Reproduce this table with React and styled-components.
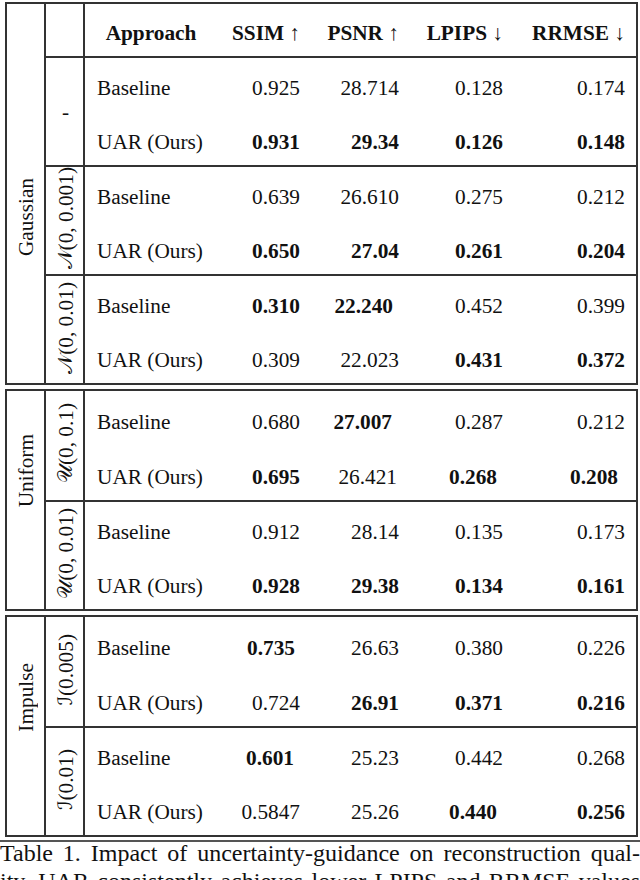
import React from 'react';
import styled, { createGlobalStyle } from 'styled-components';

const LINE = '#333';

const GlobalStyle = createGlobalStyle`
  html, body {
    margin: 0;
    padding: 0;
    background: #fff;
    overflow: hidden;
  }
  body {
    font-family: "Liberation Serif", "Times New Roman", serif;
    color: #111;
  }
`;

const Page = styled.div`
  width: 640px;
  padding-top: 2px;
  display: flex;
  flex-direction: column;
`;

const Stack = styled.div`
  display: flex;
  flex-direction: column;
  gap: 4px;
`;

const Box = styled.table`
  margin-left: 5px;
  width: 633px;
  border: 2px solid ${LINE};
  border-spacing: 0;
  table-layout: fixed;
  font-size: 21.3px;
  line-height: 24px;
`;

const Col = styled.col`
  width: ${props => props.$w}px;
`;

const Row = styled.tr`
  height: ${props => props.$h}px;
`;

const Blank = styled.td`
  border-right: 2px solid ${LINE};
  padding: 0;
`;

const HeadCell = styled.th`
  padding: 5px ${props => props.$pad}px 0 0;
  text-align: ${props => props.$align};
  font-weight: 700;
  white-space: nowrap;
  vertical-align: middle;
`;

const Arrow = styled.span`
  font-weight: 400;
`;

const Category = styled.td`
  border-right: 2px solid ${LINE};
  padding: 0 0 ${props => props.$lift * 2}px;
  text-align: center;
  vertical-align: middle;
`;

const Tag = styled.td`
  border-right: 2px solid ${LINE};
  border-top: ${props => (props.$rule ? `2px solid ${LINE}` : 'none')};
  padding: 0 0 0 2px;
  text-align: center;
  vertical-align: middle;
  white-space: nowrap;
`;

const Upright = styled.span`
  display: inline-block;
  writing-mode: vertical-rl;
  transform: rotate(180deg);
  white-space: nowrap;
`;

const Script = styled.span`
  font-family: "DejaVu Serif", "DejaVu Sans", "Liberation Serif", serif;
  font-size: 0.92em;
`;

const Method = styled.td`
  border-top: ${props => (props.$rule ? `2px solid ${LINE}` : 'none')};
  padding: 7px 0 0 12px;
  text-align: left;
  vertical-align: middle;
  white-space: nowrap;
`;

const Value = styled.td`
  border-top: ${props => (props.$rule ? `2px solid ${LINE}` : 'none')};
  padding: 7px ${props => props.$pad}px 0 0;
  text-align: right;
  font-weight: ${props => (props.$bold ? 700 : 400)};
  vertical-align: middle;
  white-space: nowrap;
`;

const Rule = styled.div`
  height: 2px;
  margin-top: 3px;
  background: #555;
`;

const Caption = styled.p`
  margin: -3px 0 0;
  font-size: 24px;
  line-height: 28px;
  color: #111;
`;

const CaptionLine = styled.span`
  display: block;
  text-align: justify;
  text-align-last: justify;
`;

const widths = [39, 39, 132, 95, 99, 104, 121];
const pads = [12, 12, 12, 11];
const metrics = [
  ['SSIM', '↑'],
  ['PSNR', '↑'],
  ['LPIPS', '↓'],
  ['RRMSE', '↓']
];

const b = (text, nudge = 0) => ({ text, bold: true, nudge });
const n = (text, nudge = 0) => ({ text, bold: false, nudge });

const sections = [
  {
    label: 'Gaussian',
    lift: 0,
    header: true,
    groups: [
      {
        tag: null,
        rows: [
          ['0.925', '28.714', '0.128', '0.174'],
          [b('0.931'), b('29.34'), b('0.126'), b('0.148')]
        ]
      },
      {
        tag: ['\u{1D4A9}', '(0, 0.001)'],
        rows: [
          ['0.639', '26.610', '0.275', '0.212'],
          [b('0.650'), b('27.04'), b('0.261'), b('0.204')]
        ]
      },
      {
        tag: ['\u{1D4A9}', '(0, 0.01)'],
        rows: [
          [b('0.310'), b('22.240', 6), '0.452', '0.399'],
          ['0.309', '22.023', b('0.431'), b('0.372')]
        ]
      }
    ]
  },
  {
    label: 'Uniform',
    lift: 27,
    groups: [
      {
        tag: ['\u{1D4B0}', '(0, 0.1)'],
        rows: [
          ['0.680', b('27.007', 7), '0.287', '0.212'],
          [b('0.695'), n('26.421', 2), b('0.268', 6), b('0.208', 7)]
        ]
      },
      {
        tag: ['\u{1D4B0}', '(0, 0.01)'],
        rows: [
          ['0.912', '28.14', '0.135', '0.173'],
          [b('0.928'), b('29.38'), b('0.134'), b('0.161')]
        ]
      }
    ]
  },
  {
    label: 'Impulse',
    lift: 27,
    groups: [
      {
        tag: ['\u2110', '(0.005)'],
        rows: [
          [b('0.735', 5), '26.63', '0.380', '0.226'],
          ['0.724', b('26.91'), b('0.371'), b('0.216')]
        ]
      },
      {
        tag: ['\u2110', '(0.01)'],
        rows: [
          [b('0.601', 6), '25.23', '0.442', '0.268'],
          ['0.5847', '25.26', b('0.440', 6), b('0.256')]
        ]
      }
    ]
  }
];

function GroupTag({ tag }) {
  if (!tag) return '-';
  return (
    <Upright>
      <Script>{tag[0]}</Script>
      {tag[1]}
    </Upright>
  );
}

function Section({ section }) {
  const total = section.groups.length * 2;
  return (
    <Box>
      <colgroup>
        {widths.map((w, i) => (
          <Col key={i} $w={w} />
        ))}
      </colgroup>
      <tbody>
        {section.header && (
          <Row $h={52}>
            <Blank />
            <Blank />
            <HeadCell $align="center" $pad={0}>
              Approach
            </HeadCell>
            {metrics.map(([name, arrow], i) => (
              <HeadCell key={name} $align="right" $pad={pads[i]}>
                {name} <Arrow>{arrow}</Arrow>
              </HeadCell>
            ))}
          </Row>
        )}
        {section.groups.map((group, g) =>
          group.rows.map((values, r) => {
            const rule = r === 0 && (g > 0 || section.header);
            return (
              <Row key={`${g}-${r}`} $h={r === 0 ? 55 : 54}>
                {g === 0 && r === 0 && (
                  <Category rowSpan={total} $lift={section.lift}>
                    <Upright>{section.label}</Upright>
                  </Category>
                )}
                {r === 0 && (
                  <Tag rowSpan={2} $rule={rule}>
                    <GroupTag tag={group.tag} />
                  </Tag>
                )}
                <Method $rule={rule}>{r === 0 ? 'Baseline' : 'UAR (Ours)'}</Method>
                {values.map((v, i) => {
                  const cell = typeof v === 'string' ? n(v) : v;
                  return (
                    <Value key={i} $rule={rule} $bold={cell.bold} $pad={pads[i] + cell.nudge}>
                      {cell.text}
                    </Value>
                  );
                })}
              </Row>
            );
          })
        )}
      </tbody>
    </Box>
  );
}

export default function App() {
  return (
    <Page>
      <GlobalStyle />
      <Stack>
        {sections.map(section => (
          <Section key={section.label} section={section} />
        ))}
      </Stack>
      <Rule />
      <Caption>
        <CaptionLine>Table 1. Impact of uncertainty-guidance on reconstruction qual-</CaptionLine>
        <CaptionLine>ity. UAR consistently achieves lower LPIPS and RRMSE values</CaptionLine>
      </Caption>
    </Page>
  );
}
